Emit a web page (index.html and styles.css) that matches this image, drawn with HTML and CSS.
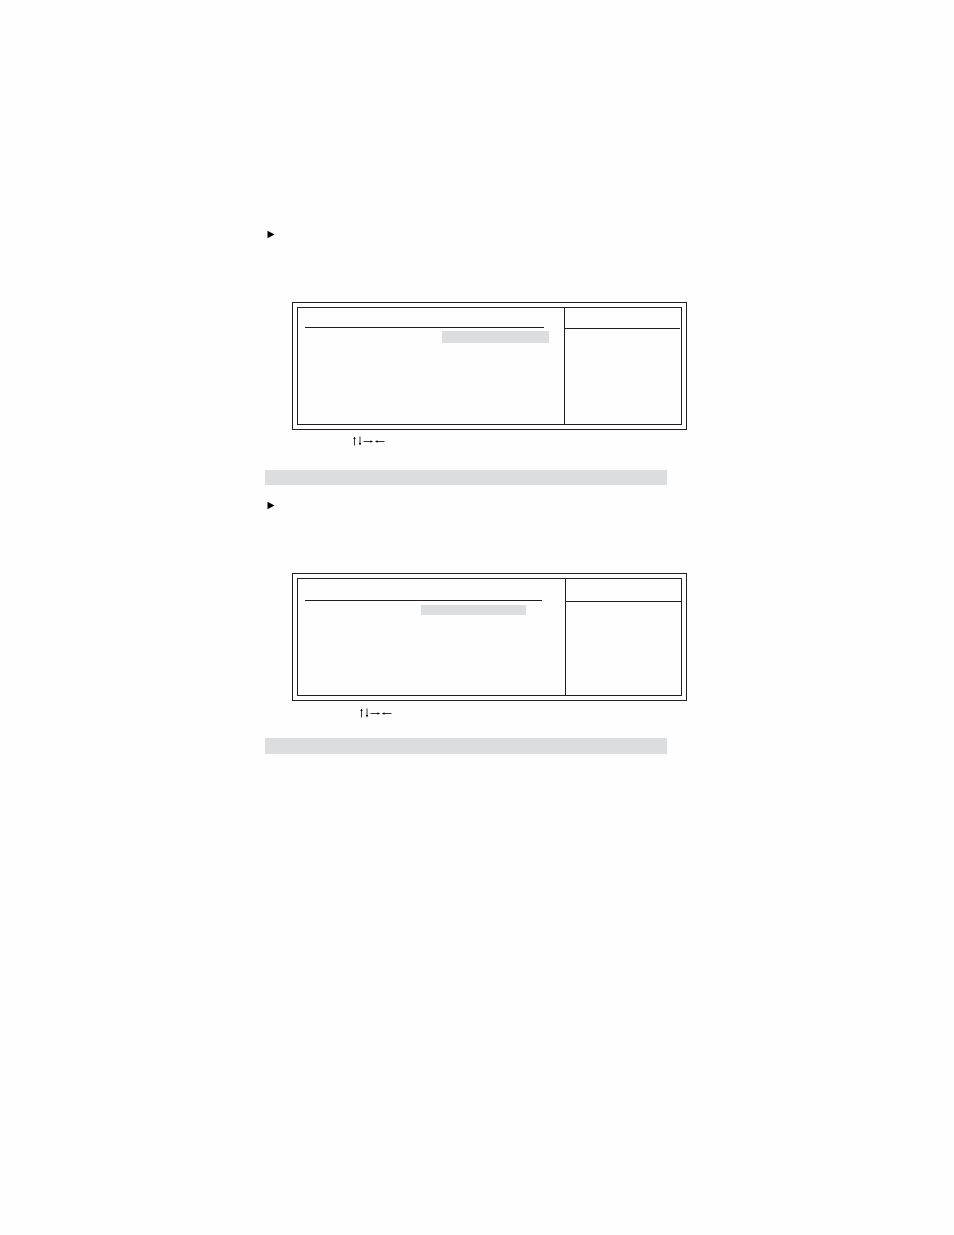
FILE: index.html
```html
<!DOCTYPE html>
<html lang="en">
<head>
    <meta charset="UTF-8">
    <meta name="viewport" content="width=device-width, initial-scale=1.0">
    <title>Setup Menus</title>
    <link rel="stylesheet" href="styles.css">
</head>
<body>
    <!-- Arrow key icons, shared by both menus -->
    <svg class="symbols" aria-hidden="true">
        <symbol id="arrow-keys" viewBox="0 0 33 10">
            <path class="line" d="M2.5 2V9.5M8 .5V8M11.5 5.5H19M25 5.5H32.5"/>
            <path d="M2.5 .5L3.7 3H1.3ZM8 9.5L6.800 7H9.200ZM21 5.500L18.500 4.300V6.700ZM23 5.500L25.500 4.300V6.700Z"/>
        </symbol>
    </svg>

    <main class="page">
        <!-- First menu -->
        <section class="menu">
            <svg class="marker" viewBox="0 0 8 9" aria-hidden="true"><path d="M.5 .7L7.500 4.500L.5 8.300Z"/></svg>
            <div class="screen">
                <div class="screen-inner">
                    <div class="options">
                        <div class="options-head"></div>
                        <div class="selected"></div>
                    </div>
                    <div class="help">
                        <div class="help-head"></div>
                    </div>
                </div>
            </div>
            <svg class="keys" role="img" aria-label="↑↓→←"><use href="#arrow-keys"/></svg>
            <div class="bar"></div>
        </section>

        <!-- Second menu -->
        <section class="menu menu-tall">
            <svg class="marker" viewBox="0 0 8 9" aria-hidden="true"><path d="M.5 .7L7.500 4.500L.5 8.300Z"/></svg>
            <div class="screen">
                <div class="screen-inner">
                    <div class="options">
                        <div class="options-head"></div>
                        <div class="selected"></div>
                    </div>
                    <div class="help">
                        <div class="help-head"></div>
                    </div>
                </div>
            </div>
            <svg class="keys" role="img" aria-label="↑↓→←"><use href="#arrow-keys"/></svg>
            <div class="bar"></div>
        </section>
    </main>
</body>
</html>
```
FILE: styles.css
```css
:root {
    --ink: #231f20;
    --shade: #dcddde;
}

* {
    margin: 0;
    padding: 0;
    box-sizing: border-box;
}

body {
    background: #fefefe;
    color: var(--ink);
    font-family: "Liberation Serif", serif;
}

.symbols {
    display: none;
}

.page {
    max-width: 424px;
    margin: 0 auto;
    padding: 230px 0 40px;
    display: flex;
    flex-direction: column;
    gap: 16px;
}

.marker {
    display: block;
    width: 8px;
    height: 9px;
    margin: 0 0 63px 2px;
    fill: #000;
}

/* Double frame */
.screen {
    margin: 0 2px 0 27px;
    padding: 4px;
    border: 1px solid var(--ink);
}

.screen-inner {
    display: flex;
    min-height: 118px;
    border: 1px solid var(--ink);
}

.options {
    flex: 1;
    padding-left: 7px;
}

.options-head {
    height: 20px;
    margin-right: 20px;
    border-bottom: 1px solid var(--ink);
}

.selected {
    width: 107px;
    height: 12px;
    margin: 3px 0 0 137px;
    background: var(--shade);
}

.help {
    width: 117px;
    border-left: 1px solid var(--ink);
}

.help-head {
    height: 21px;
    margin-right: 1px;
    border-bottom: 1px solid var(--ink);
}

.keys {
    display: block;
    width: 33px;
    height: 10px;
    margin: 6px 0 24px 87px;
    fill: #000;
}

.line {
    fill: none;
    stroke: #000;
    stroke-width: 0.8;
}

.bar {
    height: 15px;
    margin-right: 22px;
    background: var(--shade);
}

/* Menu with the taller head row */
.menu-tall .options-head {
    height: 22px;
    margin-right: 23px;
}

.menu-tall .selected {
    width: 105px;
    height: 10px;
    margin: 4px 0 0 116px;
}

.menu-tall .help {
    width: 116px;
}

.menu-tall .help-head {
    height: 23px;
    margin-right: 0;
}

.menu-tall .keys {
    margin: 7px 0 20px 94px;
}

.menu-tall .bar {
    height: 16px;
}
```
